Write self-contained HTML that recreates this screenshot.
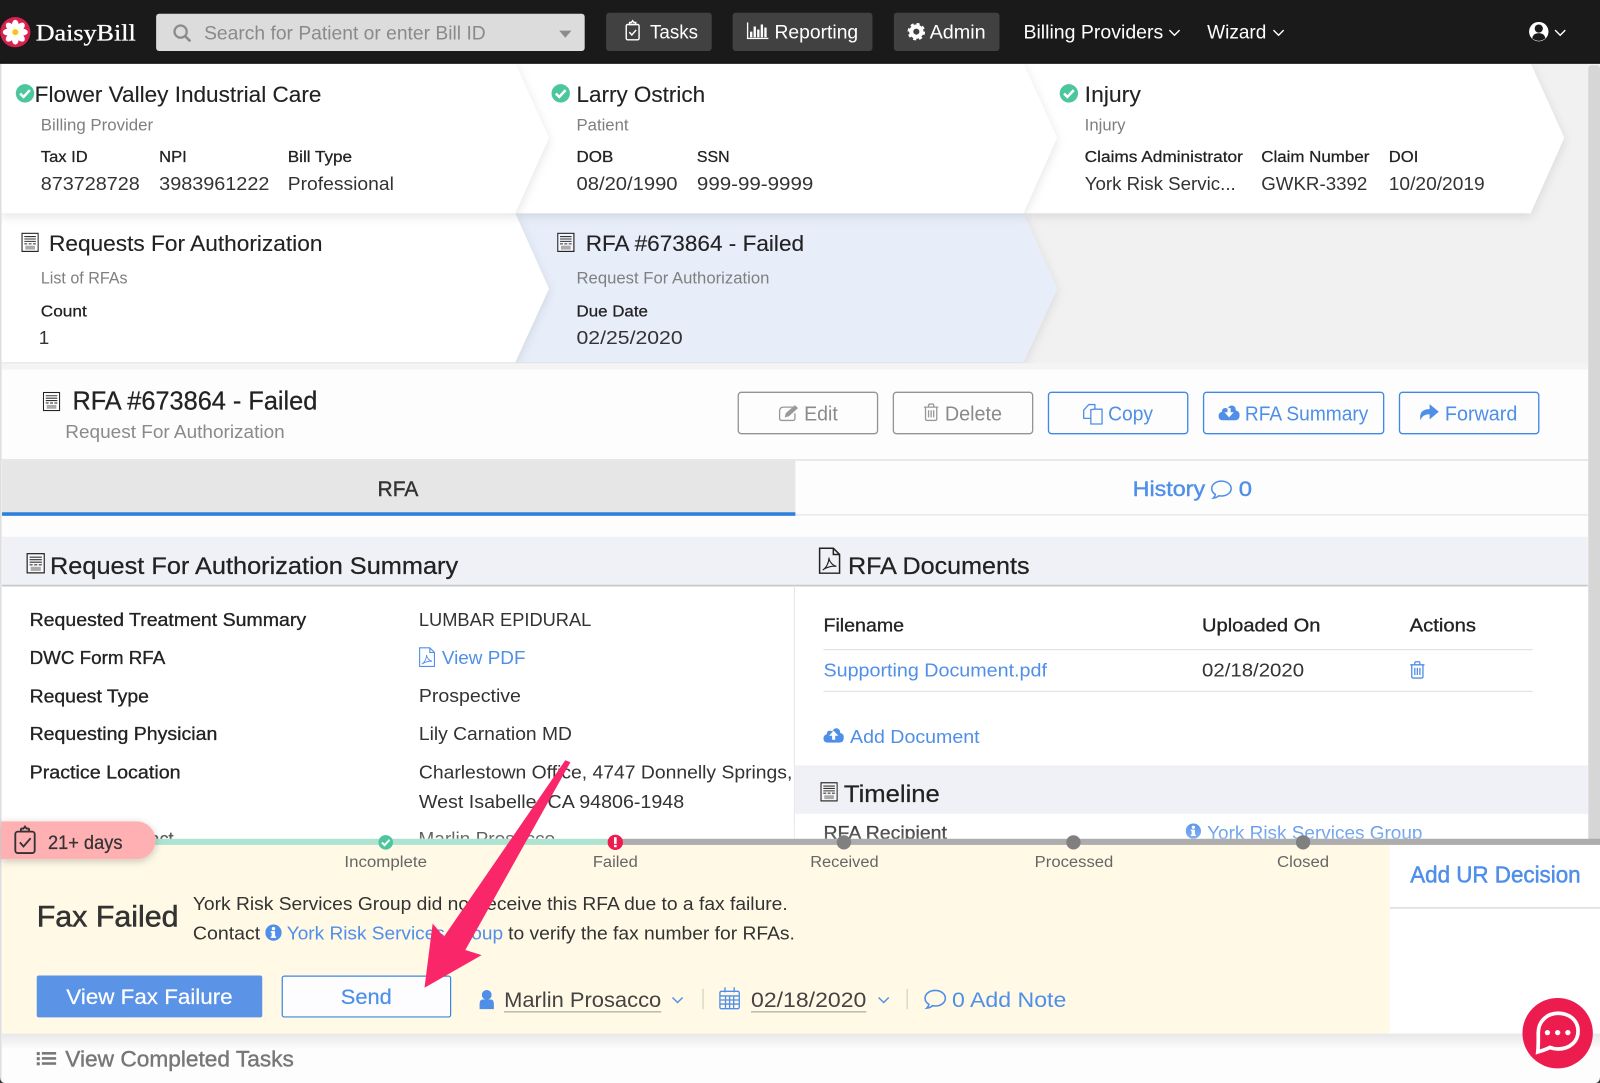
<!DOCTYPE html>
<html lang="en"><head><meta charset="utf-8"><title>DaisyBill - RFA</title>
<style>
html,body{margin:0;padding:0;background:#fff;width:1600px;height:1083px;overflow:hidden}
svg{display:block}
text{font-family:"Liberation Sans",sans-serif;white-space:pre}
.nav{fill:#fff;font-size:19px}
.h{fill:#222;font-size:22px;stroke:#222;stroke-width:.12}
.s{fill:#7f7f7f;font-size:16px}
.l{fill:#222;font-size:15.5px;stroke:#222;stroke-width:.25}
.v{fill:#333;font-size:18.5px}
.k{fill:#222;font-size:18px;stroke:#222;stroke-width:.3}
.b{fill:#4f8fe8}
.g{fill:#8a8a8a}
.sec{fill:#222;font-size:24px;stroke:#222;stroke-width:.25}
.n{fill:#666;font-size:15.5px}
.p{font-size:18.5px;fill:#333}
.btn{font-size:19.5px;stroke-width:.2}
</style></head><body>
<svg xmlns="http://www.w3.org/2000/svg" width="1600" height="1083" viewBox="0 0 1568 1061.34" preserveAspectRatio="none">
<defs>
<filter id="sh" x="-10%" y="-20%" width="120%" height="150%"><feDropShadow dx="0" dy="3" stdDeviation="5" flood-color="#000" flood-opacity=".11"/></filter>
<filter id="sh2" x="-20%" y="-40%" width="140%" height="190%"><feDropShadow dx="0" dy="2" stdDeviation="4" flood-color="#000" flood-opacity=".22"/></filter>
<linearGradient id="fade" x1="0" y1="0" x2="0" y2="1"><stop offset="0" stop-color="#fff" stop-opacity="0"/><stop offset="1" stop-color="#fff" stop-opacity=".3"/></linearGradient>
<linearGradient id="under" x1="0" y1="0" x2="0" y2="1"><stop offset="0" stop-color="#e8e8e8"/><stop offset="1" stop-color="#fff"/></linearGradient>
<clipPath id="above"><rect x="0" y="790" width="1568" height="32"/></clipPath>
<symbol id="rfa" viewBox="0 0 18 20"><rect x=".6" y=".6" width="16.800" height="18.800" fill="#fff" fill-opacity=".5" stroke="#222" stroke-width="1.200"/><path d="M3 4h12M3 6.500h12M3 9h12" stroke="#333" stroke-width="1.100"/><path d="M3 11.500h3M7.500 11.500h3M12 11.500h3" stroke="#666" stroke-width="1.500"/><rect x="4" y="13.500" width="10" height="4" fill="#aaa"/></symbol>
<symbol id="ok" viewBox="0 0 20 20"><circle cx="10" cy="10" r="9.500" fill="#4cc69c"/><path d="M5 10.200l3.500 3.500 6.500-7" fill="none" stroke="#fff" stroke-width="2.600"/></symbol>
<symbol id="bub" viewBox="0 0 22 20"><path d="M11 1.500C5.500 1.500 1.500 4.800 1.500 8.800c0 2.400 1.400 4.400 3.600 5.700-.3 1.500-1 2.700-2 3.600 2.200-.2 4-1 5.300-2.300 1 .2 1.700.3 2.600.3 5.500 0 9.500-3.300 9.500-7.300S16.500 1.500 11 1.500z" fill="none" stroke="#4f8fe8" stroke-width="1.500"/></symbol>
<symbol id="trash" viewBox="0 0 16 18"><path d="M1 4h14M5.500 4V2.200Q5.500 1 6.700 1h2.600q1.200 0 1.200 1.200V4M2.500 4v11.500q0 1.500 1.500 1.500h8q1.500 0 1.500-1.500V4M5.500 7v7M8 7v7M10.500 7v7" fill="none" stroke="currentColor" stroke-width="1.300"/></symbol>
<symbol id="cloud" viewBox="0 0 22 16"><path d="M5 16Q0 16 0 11.500 0 8 3.500 7 3.500 3 7 3q1.500 0 2.500 1Q11 0 14.500 .5 18 1 18 5.500q4 .8 4 5 0 5.500-5 5.500z" fill="currentColor"/></symbol>
<symbol id="info" viewBox="0 0 16 16"><circle cx="8" cy="8" r="8" fill="#4f8fe8"/><rect x="6.200" y="6.500" width="3.400" height="6.500" fill="#fff"/><rect x="5.300" y="6.500" width="2" height="1.400" fill="#fff"/><rect x="5.300" y="11.700" width="5.300" height="1.400" fill="#fff"/><circle cx="8" cy="4" r="1.700" fill="#fff"/></symbol>
<symbol id="pdf" viewBox="0 0 18 22"><path d="M1 1h11l5 5v15H1zM12 1v5h5" fill="none" stroke="currentColor" stroke-width="1.200"/><path d="M3.500 18.500c3-2 5-6 5-10 0 3 3 6.500 6 7-3-.5-8 .5-11 3z" fill="none" stroke="currentColor" stroke-width=".9"/></symbol>
<symbol id="chev" viewBox="0 0 12 8"><path d="M1 1.500l5 5 5-5" fill="none" stroke="currentColor" stroke-width="1.400"/></symbol>
</defs>

<!-- page base -->
<rect width="1568" height="1062" fill="#fff"/>
<rect x="0" y="62" width="1568" height="300" fill="#f1f1f1"/>

<!-- breadcrumb chevrons -->
<g filter="url(#sh)"><polygon points="505,209 1003,209 1036,283 1003,355 505,355 538,283" fill="#e7eefa"/></g>
<g filter="url(#sh)"><polygon points="1,209 505,209 538,283 505,355 1,355" fill="#fff"/></g>
<g filter="url(#sh)"><polygon points="1003,62 1500,62 1533,135 1500,209 1003,209 1036,135" fill="#fff"/></g>
<g filter="url(#sh)"><polygon points="505,62 1003,62 1036,135 1003,209 505,209 538,135" fill="#fff"/></g>
<g filter="url(#sh)"><polygon points="1,62 505,62 538,135 505,209 1,209" fill="#fff"/></g>

<use href="#ok" x="15" y="82" width="19" height="19"/>
<text class="h" x="34" y="100" textLength="281" lengthAdjust="spacingAndGlyphs">Flower Valley Industrial Care</text>
<text class="s" x="40" y="128" textLength="110" lengthAdjust="spacingAndGlyphs">Billing Provider</text>
<text class="l" x="40" y="159" textLength="46" lengthAdjust="spacingAndGlyphs">Tax ID</text>
<text class="l" x="156" y="159" textLength="27" lengthAdjust="spacingAndGlyphs">NPI</text>
<text class="l" x="282" y="159" textLength="63" lengthAdjust="spacingAndGlyphs">Bill Type</text>
<text class="v" x="40" y="186" textLength="97" lengthAdjust="spacingAndGlyphs">873728728</text>
<text class="v" x="156" y="186" textLength="108" lengthAdjust="spacingAndGlyphs">3983961222</text>
<text class="v" x="282" y="186" textLength="104" lengthAdjust="spacingAndGlyphs">Professional</text>

<use href="#ok" x="540" y="82" width="19" height="19"/>
<text class="h" x="565" y="100" textLength="126" lengthAdjust="spacingAndGlyphs">Larry Ostrich</text>
<text class="s" x="565" y="128" textLength="51" lengthAdjust="spacingAndGlyphs">Patient</text>
<text class="l" x="565" y="159" textLength="36" lengthAdjust="spacingAndGlyphs">DOB</text>
<text class="l" x="683" y="159" textLength="32" lengthAdjust="spacingAndGlyphs">SSN</text>
<text class="v" x="565" y="186" textLength="99" lengthAdjust="spacingAndGlyphs">08/20/1990</text>
<text class="v" x="683" y="186" textLength="114" lengthAdjust="spacingAndGlyphs">999-99-9999</text>

<use href="#ok" x="1038" y="82" width="19" height="19"/>
<text class="h" x="1063" y="100" textLength="55" lengthAdjust="spacingAndGlyphs">Injury</text>
<text class="s" x="1063" y="128" textLength="40" lengthAdjust="spacingAndGlyphs">Injury</text>
<text class="l" x="1063" y="159" textLength="155" lengthAdjust="spacingAndGlyphs">Claims Administrator</text>
<text class="l" x="1236" y="159" textLength="106" lengthAdjust="spacingAndGlyphs">Claim Number</text>
<text class="l" x="1361" y="159" textLength="29" lengthAdjust="spacingAndGlyphs">DOI</text>
<text class="v" x="1063" y="186" textLength="148" lengthAdjust="spacingAndGlyphs">York Risk Servic...</text>
<text class="v" x="1236" y="186" textLength="104" lengthAdjust="spacingAndGlyphs">GWKR-3392</text>
<text class="v" x="1361" y="186" textLength="94" lengthAdjust="spacingAndGlyphs">10/20/2019</text>

<use href="#rfa" x="21" y="228" width="17" height="19"/>
<text class="h" x="48" y="246" textLength="268" lengthAdjust="spacingAndGlyphs">Requests For Authorization</text>
<text class="s" x="40" y="278" textLength="85" lengthAdjust="spacingAndGlyphs">List of RFAs</text>
<text class="l" x="40" y="310" textLength="45" lengthAdjust="spacingAndGlyphs">Count</text>
<text class="v" x="38" y="337">1</text>

<use href="#rfa" x="546" y="228" width="17" height="19"/>
<text class="h" x="574" y="246" textLength="214" lengthAdjust="spacingAndGlyphs">RFA #673864 - Failed</text>
<text class="s" x="565" y="278" textLength="189" lengthAdjust="spacingAndGlyphs">Request For Authorization</text>
<text class="l" x="565" y="310" textLength="70" lengthAdjust="spacingAndGlyphs">Due Date</text>
<text class="v" x="565" y="337" textLength="104" lengthAdjust="spacingAndGlyphs">02/25/2020</text>

<!-- content backgrounds -->
<rect x="1" y="362" width="1567" height="700" fill="#fdfdfd"/>
<rect x="0" y="356" width="1568" height="6" fill="#f4f4f4"/>
<rect x="1" y="450" width="1567" height="1.500" fill="#e4e4e4"/>

<!-- title bar -->
<use href="#rfa" x="42" y="384" width="17" height="19"/>
<text x="71" y="401.500" font-size="25" fill="#222" stroke="#222" stroke-width=".25" textLength="240" lengthAdjust="spacingAndGlyphs">RFA #673864 - Failed</text>
<text x="64" y="429" font-size="18.5" fill="#8a8a8a" textLength="215" lengthAdjust="spacingAndGlyphs">Request For Authorization</text>

<g fill="none" stroke-width="1.300">
<rect x="723.500" y="384.500" width="136.500" height="40.500" rx="3" stroke="#949494"/>
<rect x="875.500" y="384.500" width="136.500" height="40.500" rx="3" stroke="#949494"/>
<rect x="1027.500" y="384.500" width="136.500" height="40.500" rx="3" stroke="#3f88e4"/>
<rect x="1179.500" y="384.500" width="176.500" height="40.500" rx="3" stroke="#3f88e4"/>
<rect x="1371.500" y="384.500" width="136.500" height="40.500" rx="3" stroke="#3f88e4"/>
</g>
<!-- edit icon -->
<g fill="none" stroke="#999" stroke-width="1.300"><path d="M777 399h-9q-4 0-4 4v7q0 2 2 2h11q2 0 2-2v-5"/></g>
<path d="M769 409l1-4 9-8 3 3-9 8z" fill="#999"/>
<text class="btn g" x="788" y="412" textLength="33" lengthAdjust="spacingAndGlyphs">Edit</text>
<use href="#trash" x="904.500" y="395" width="16" height="18" color="#999"/>
<text class="btn g" x="926" y="412" textLength="56" lengthAdjust="spacingAndGlyphs">Delete</text>
<!-- copy icon -->
<g fill="#fdfdfd" stroke="#4f8fe8" stroke-width="1.300" stroke-linejoin="round"><path d="M1062 402l5-5.500h6v13.500h-11z"/><path d="M1069 401.500l3.500-.5h7.500v14.500h-11z"/></g>
<text class="btn b" x="1086" y="412" textLength="44" lengthAdjust="spacingAndGlyphs">Copy</text>
<use href="#cloud" x="1194" y="397" width="21" height="15" color="#4f8fe8"/>
<path d="M1203 400h3v4h3l-4.500 5-4.500-5h3z" fill="#fff"/>
<text class="btn b" x="1220" y="412" textLength="121" lengthAdjust="spacingAndGlyphs">RFA Summary</text>
<path d="M1392 412q-2-11 9-11v-5l9 7.500-9 7.500v-5q-7 0-9 6z" fill="#4f8fe8"/>
<text class="btn b" x="1416" y="412" textLength="71" lengthAdjust="spacingAndGlyphs">Forward</text>

<!-- tabs -->
<rect x="2" y="451.500" width="777.500" height="51" fill="#e6e6e6"/>
<rect x="2" y="502" width="777.500" height="3.500" fill="#2f7fdc"/>
<rect x="780" y="504" width="776" height="1.200" fill="#e4e4e4"/>
<text x="370" y="486" font-size="21" fill="#333" stroke="#333" stroke-width=".4" textLength="40" lengthAdjust="spacingAndGlyphs">RFA</text>
<text x="1110" y="486" font-size="21" fill="#4f8fe8" stroke="#4f8fe8" stroke-width=".4" textLength="71" lengthAdjust="spacingAndGlyphs">History</text>
<use href="#bub" x="1186" y="470" width="22" height="20"/>
<text x="1214" y="486" font-size="21" fill="#4f8fe8" stroke="#4f8fe8" stroke-width=".4" textLength="13" lengthAdjust="spacingAndGlyphs">0</text>

<!-- section headers -->
<rect x="2" y="526" width="1554" height="47" fill="#f0f1f6"/>
<rect x="2" y="573" width="1554" height="1.800" fill="#c9c9c9"/>
<rect x="2" y="574.800" width="776" height="260" fill="#fff"/>
<rect x="779" y="574.800" width="777" height="260" fill="#fff"/>
<rect x="778" y="574" width="1" height="250" fill="#e6e6e6"/>
<use href="#rfa" x="26" y="542" width="18" height="20"/>
<text class="sec" x="49" y="562.500" textLength="400" lengthAdjust="spacingAndGlyphs">Request For Authorization Summary</text>
<use href="#pdf" x="802" y="536" width="22" height="27" color="#222"/>
<text class="sec" x="831" y="562.500" textLength="178" lengthAdjust="spacingAndGlyphs">RFA Documents</text>

<!-- left rows -->
<text class="k" x="29" y="613.700" textLength="271" lengthAdjust="spacingAndGlyphs">Requested Treatment Summary</text>
<text class="k" x="29" y="650.700" textLength="133" lengthAdjust="spacingAndGlyphs">DWC Form RFA</text>
<text class="k" x="29" y="688.300" textLength="117" lengthAdjust="spacingAndGlyphs">Request Type</text>
<text class="k" x="29" y="725.300" textLength="184" lengthAdjust="spacingAndGlyphs">Requesting Physician</text>
<text class="k" x="29" y="763" textLength="148" lengthAdjust="spacingAndGlyphs">Practice Location</text>
<g clip-path="url(#above)">
<text class="k" x="29" y="828" textLength="141" lengthAdjust="spacingAndGlyphs">Physician Contact</text>
<text class="p" x="410" y="828" textLength="134" lengthAdjust="spacingAndGlyphs">Marlin Prosacco</text>
<text class="k" x="807" y="822" textLength="121" lengthAdjust="spacingAndGlyphs">RFA Recipient</text>
<text class="b" font-size="18.500" x="1183" y="822" textLength="211" lengthAdjust="spacingAndGlyphs">York Risk Services Group</text>
<use href="#info" x="1162" y="807" width="15" height="15"/>
</g>
<text class="p" x="410.500" y="613.700" textLength="169" lengthAdjust="spacingAndGlyphs">LUMBAR EPIDURAL</text>
<use href="#pdf" x="410" y="634" width="17" height="20" color="#4f8fe8"/>
<text class="b" font-size="18.500" x="433" y="650.500" textLength="82" lengthAdjust="spacingAndGlyphs">View PDF</text>
<text class="p" x="410.500" y="688" textLength="100" lengthAdjust="spacingAndGlyphs">Prospective</text>
<text class="p" x="410.500" y="725" textLength="150" lengthAdjust="spacingAndGlyphs">Lily Carnation MD</text>
<text class="p" x="410.500" y="763" textLength="366" lengthAdjust="spacingAndGlyphs">Charlestown Office, 4747 Donnelly Springs,</text>
<text class="p" x="410.500" y="792" textLength="260" lengthAdjust="spacingAndGlyphs">West Isabelle, CA 94806-1948</text>

<!-- right docs table -->
<text class="k" x="807" y="619" textLength="79" lengthAdjust="spacingAndGlyphs">Filename</text>
<text class="k" x="1178" y="619" textLength="116" lengthAdjust="spacingAndGlyphs">Uploaded On</text>
<text class="k" x="1381.500" y="619" textLength="65" lengthAdjust="spacingAndGlyphs">Actions</text>
<rect x="807" y="636" width="695" height="1.200" fill="#e3e3e3"/>
<text class="b" font-size="18.500" x="807" y="663" textLength="219" lengthAdjust="spacingAndGlyphs">Supporting Document.pdf</text>
<text class="p" x="1178" y="663" textLength="100" lengthAdjust="spacingAndGlyphs">02/18/2020</text>
<use href="#trash" x="1381" y="647.500" width="16" height="18" color="#4f8fe8"/>
<rect x="807" y="677" width="695" height="1.200" fill="#e3e3e3"/>
<use href="#cloud" x="807" y="713" width="20" height="15" color="#4f8fe8"/>
<path d="M817 716l4.500 5h-3v4h-3v-4h-3z" fill="#fff"/>
<text class="b" font-size="18.500" x="833" y="728" textLength="127" lengthAdjust="spacingAndGlyphs">Add Document</text>

<!-- timeline header -->
<rect x="779" y="750" width="777" height="47.500" fill="#f0f1f6"/>
<use href="#rfa" x="804" y="766" width="17" height="20"/>
<text class="sec" x="827" y="786" textLength="94" lengthAdjust="spacingAndGlyphs">Timeline</text>

<!-- scrollbar strip & left edge -->
<rect x="1556.500" y="64" width="11.500" height="760" rx="3" fill="#d6d6d6"/>
<rect x="0" y="62" width="1.500" height="1000" fill="#dedede"/>

<!-- fade -->
<rect x="2" y="802" width="1554" height="20" fill="url(#fade)"/>

<!-- bottom panel -->
<rect x="2" y="828" width="1360" height="185" fill="#fff9e6"/>
<rect x="1362" y="828" width="206" height="184" fill="#fff"/>
<rect x="1362" y="889" width="206" height="1.500" fill="#dcdcdc"/>
<rect x="2" y="1013" width="1566" height="17" fill="url(#under)"/>
<rect x="130" y="822" width="473" height="6" fill="#aee3cf"/>
<rect x="603" y="822" width="965" height="6" fill="#adadad"/>

<g fill="#808080"><circle cx="827" cy="825.500" r="7"/><circle cx="1052" cy="825.500" r="7"/><circle cx="1277" cy="825.500" r="7"/></g>
<use href="#ok" x="370.500" y="818" width="15" height="15"/>
<circle cx="603" cy="825.500" r="7.500" fill="#ee1c4e"/><rect x="601.700" y="820.500" width="2.600" height="6.500" fill="#fff"/><rect x="601.700" y="828" width="2.600" height="2.300" fill="#fff"/>
<text class="n" x="337.500" y="849.700" textLength="81" lengthAdjust="spacingAndGlyphs">Incomplete</text>
<text class="n" x="581" y="849.700" textLength="44" lengthAdjust="spacingAndGlyphs">Failed</text>
<text class="n" x="794" y="849.700" textLength="67" lengthAdjust="spacingAndGlyphs">Received</text>
<text class="n" x="1014" y="849.700" textLength="77" lengthAdjust="spacingAndGlyphs">Processed</text>
<text class="n" x="1251.500" y="849.700" textLength="51" lengthAdjust="spacingAndGlyphs">Closed</text>

<g filter="url(#sh2)"><path d="M1 805h133a18.500 18.500 0 0 1 0 37H1z" fill="#ffb0b3"/></g>
<g fill="none" stroke="#333" stroke-width="1.800"><rect x="15" y="815" width="19" height="21" rx="2.500"/><path d="M20.500 815v-2q0-1 1-1h1.500l1.500-2 1.500 2h1.500q1 0 1 1v2zM19.500 825.500l3.500 4 7-8"/></g>
<text x="47" y="832" font-size="19" fill="#333" stroke="#333" stroke-width=".25" textLength="73" lengthAdjust="spacingAndGlyphs">21+ days</text>

<text x="36" y="908" font-size="29" fill="#333" stroke="#333" stroke-width=".5" textLength="139" lengthAdjust="spacingAndGlyphs">Fax Failed</text>
<text class="p" x="189" y="892" textLength="583" lengthAdjust="spacingAndGlyphs">York Risk Services Group did not receive this RFA due to a fax failure.</text>
<text class="p" x="189" y="920.700" textLength="66" lengthAdjust="spacingAndGlyphs">Contact</text>
<use href="#info" x="260" y="906" width="16" height="16"/>
<text class="b" font-size="18.500" x="281" y="920.700" textLength="212" lengthAdjust="spacingAndGlyphs">York Risk Services Group</text>
<text class="p" x="498" y="920.700" textLength="281" lengthAdjust="spacingAndGlyphs">to verify the fax number for RFAs.</text>

<rect x="36" y="956" width="221" height="41" rx="2" fill="#5b93e6"/>
<text x="65" y="984" font-size="20.500" fill="#fff" stroke="#fff" stroke-width=".2" textLength="163" lengthAdjust="spacingAndGlyphs">View Fax Failure</text>
<rect x="276.600" y="956.600" width="165" height="40" rx="2" fill="#fdfdff" stroke="#3b86e0" stroke-width="1.200"/>
<text x="334" y="984" font-size="20.500" fill="#4f8fe8" stroke="#4f8fe8" stroke-width=".2" textLength="50" lengthAdjust="spacingAndGlyphs">Send</text>

<!-- assignee -->
<circle cx="477" cy="975" r="4.800" fill="#4f8fe8"/><path d="M470 989v-5q0-4.500 3-4.500h8q3 0 3 4.500v5z" fill="#4f8fe8"/>
<text x="494" y="987" font-size="21" fill="#444" textLength="154" lengthAdjust="spacingAndGlyphs">Marlin Prosacco</text>
<rect x="494" y="991" width="154" height="1.200" fill="#aaa"/>
<use href="#chev" x="658" y="976" width="12" height="8" color="#4f8fe8"/>
<rect x="688.500" y="969" width="1" height="20" fill="#c9c9b8"/>
<g fill="none" stroke="#4f8fe8" stroke-width="1.300"><rect x="705.500" y="971.500" width="19" height="17" rx="1.500"/><path d="M710.500 967.500v5M719.500 967.500v5M706 976h18M711 976v12M715 976v12M719 976v12M706 980h18M706 984h18"/></g>
<text x="736" y="987" font-size="21" fill="#444" textLength="113" lengthAdjust="spacingAndGlyphs">02/18/2020</text>
<rect x="736" y="991" width="113" height="1.200" fill="#aaa"/>
<use href="#chev" x="860" y="976" width="12" height="8" color="#4f8fe8"/>
<rect x="888.500" y="969" width="1" height="20" fill="#c9c9b8"/>
<use href="#bub" x="905" y="969" width="23" height="21"/>
<text x="933" y="987" font-size="21" fill="#4f8fe8" textLength="112" lengthAdjust="spacingAndGlyphs">0 Add Note</text>

<text x="1382" y="865" font-size="22.500" fill="#4f8fe8" stroke="#4f8fe8" stroke-width=".5" textLength="167" lengthAdjust="spacingAndGlyphs">Add UR Decision</text>

<!-- completed -->
<g fill="#777"><rect x="36" y="1031" width="3" height="3"/><rect x="36" y="1036" width="3" height="3"/><rect x="36" y="1041" width="3" height="3"/><rect x="41" y="1031" width="14" height="2.500"/><rect x="41" y="1036" width="14" height="2.500"/><rect x="41" y="1041" width="14" height="2.500"/></g>
<text x="64" y="1045" font-size="22" fill="#777" stroke="#777" stroke-width=".4" textLength="224" lengthAdjust="spacingAndGlyphs">View Completed Tasks</text>

<!-- arrow -->
<polygon points="554,745 559,747 456,931 472,936 416,968 424,905 435,918" fill="#f9266a"/>

<!-- chat -->
<circle cx="1526.500" cy="1012.500" r="34.500" fill="#ec1c4f"/>
<path d="M1527 993c-11 0-19.500 8-19.500 19 0 7 .3 12-.5 19 5-1.500 9-3 12-4.500 2.500 1 5 1.500 8 1.500 11 0 19.500-7 19.500-17.500S1538 993 1527 993z" fill="none" stroke="#fff" stroke-width="3.600"/>
<circle cx="1516.500" cy="1012" r="2.600" fill="#fff"/><circle cx="1526.500" cy="1012" r="2.600" fill="#fff"/><circle cx="1536.500" cy="1012" r="2.600" fill="#fff"/>

<!-- corners -->
<path d="M0 1061.500v-6q0 6 6 6z" fill="#333"/>
<path d="M1568 1061.500v-6q0 6-6 6z" fill="#333"/>

<!-- navbar -->
<rect x="0" y="0" width="1568" height="62" fill="#1a1a1a"/>
<rect x="0" y="61.500" width="1568" height="1" fill="#000"/>
<circle cx="15" cy="31.500" r="14.800" fill="#d9214f"/>
<g fill="#fff" transform="translate(15 31.500)">
<ellipse cy="-7.200" rx="3.300" ry="5"/>
<ellipse cy="-7.200" rx="3.300" ry="5" transform="rotate(45)"/>
<ellipse cy="-7.200" rx="3.300" ry="5" transform="rotate(90)"/>
<ellipse cy="-7.200" rx="3.300" ry="5" transform="rotate(135)"/>
<ellipse cy="-7.200" rx="3.300" ry="5" transform="rotate(180)"/>
<ellipse cy="-7.200" rx="3.300" ry="5" transform="rotate(225)"/>
<ellipse cy="-7.200" rx="3.300" ry="5" transform="rotate(270)"/>
<ellipse cy="-7.200" rx="3.300" ry="5" transform="rotate(315)"/>
<circle r="4"/>
</g>
<circle cx="15" cy="31.500" r="3" fill="#f5c518"/>
<text x="35" y="39.500" fill="#fff" stroke="#fff" stroke-width=".3" font-size="23" style="font-family:'Liberation Serif',serif" textLength="98" lengthAdjust="spacingAndGlyphs">DaisyBill</text>
<rect x="153" y="13.500" width="420" height="36.500" rx="3" fill="#dcdcdc"/>
<circle cx="177" cy="31" r="6" fill="none" stroke="#8c8c8c" stroke-width="2.200"/><path d="M181.500 35.500l5 5" stroke="#8c8c8c" stroke-width="2.600"/>
<text x="200" y="38.500" font-size="19" fill="#8a8a8a" textLength="276" lengthAdjust="spacingAndGlyphs">Search for Patient or enter Bill ID</text>
<polygon points="548,30 560,30 554,37" fill="#8c8c8c"/>
<rect x="594" y="12.500" width="103.500" height="37.500" rx="3" fill="#414141"/>
<rect x="718" y="12.500" width="137" height="37.500" rx="3" fill="#414141"/>
<rect x="876" y="12.500" width="103.500" height="37.500" rx="3" fill="#414141"/>
<g fill="none" stroke="#fff" stroke-width="1.400"><rect x="613.700" y="24" width="12.600" height="15" rx="1.500"/><path d="M617 24v-2h1.800l1.200-1.700 1.200 1.700h1.800v2zM616.800 31.500l2.400 2.800 4.200-5"/></g>
<text class="nav" x="637" y="37.500" textLength="47" lengthAdjust="spacingAndGlyphs">Tasks</text>
<g fill="#fff"><rect x="732" y="22" width="1.300" height="16"/><rect x="732" y="37" width="21" height="1.300"/><rect x="735" y="31" width="2.300" height="5.500"/><rect x="738.500" y="26" width="2.300" height="10.500"/><rect x="742" y="29" width="2.300" height="7.500"/><rect x="745.500" y="24" width="2.300" height="12.500"/><rect x="749" y="27" width="2.300" height="9.500"/></g>
<text class="nav" x="759" y="37.500" textLength="82" lengthAdjust="spacingAndGlyphs">Reporting</text>
<circle cx="898" cy="31" r="5" fill="none" stroke="#fff" stroke-width="4"/><circle cx="898" cy="31" r="7.300" fill="none" stroke="#fff" stroke-width="2.600" stroke-dasharray="3 2.730"/>
<text class="nav" x="911" y="37.500" textLength="55" lengthAdjust="spacingAndGlyphs">Admin</text>
<text class="nav" x="1003" y="37.500" textLength="137" lengthAdjust="spacingAndGlyphs">Billing Providers</text>
<use href="#chev" x="1145" y="28" width="12" height="8" color="#fff"/>
<text class="nav" x="1183" y="37.500" textLength="58" lengthAdjust="spacingAndGlyphs">Wizard</text>
<use href="#chev" x="1247" y="28" width="12" height="8" color="#fff"/>
<circle cx="1508" cy="31" r="9.500" fill="#fff"/><circle cx="1508" cy="28" r="4" fill="#1a1a1a"/><path d="M1501.500 37.500q1-5 6.500-5t6.500 5q-3 2.500-6.500 2.500t-6.500-2.500z" fill="#1a1a1a"/>
<use href="#chev" x="1523" y="28" width="12" height="8" color="#fff"/>
</svg>
</body></html>
